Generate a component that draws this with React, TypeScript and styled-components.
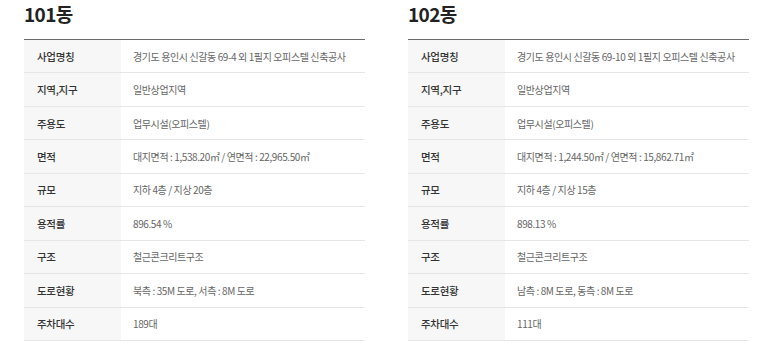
import React from 'react';
import styled, { createGlobalStyle } from 'styled-components';

const GlobalStyle = createGlobalStyle`
  html, body {
    margin: 0;
    padding: 0;
    background: #fff;
  }
  body {
    font-family: "Noto Sans CJK KR", "Noto Sans", sans-serif;
  }
`;

const Page = styled.div`
  display: grid;
  grid-template-columns: 341px 341px;
  column-gap: 43px;
  padding: 0 24px;
`;

const Block = styled.section`
  display: flex;
  flex-direction: column;
`;

const Title = styled.h2`
  margin: 0;
  height: 39px;
  box-sizing: border-box;
  font-size: 19px;
  line-height: 28px;
  font-weight: 700;
  color: #222;
  letter-spacing: -0.6px;
`;

const Table = styled.div`
  border-top: 1px solid #6b6b6b;
`;

const Row = styled.div`
  display: grid;
  grid-template-columns: 97px 1fr;
  height: 33.45px;
  box-sizing: border-box;
  border-bottom: 1px solid #e6e6e6;
`;

const Label = styled.div`
  display: flex;
  align-items: center;
  padding-left: 13px;
  background: #f7f7f8;
  font-size: 10.5px;
  font-weight: 500;
  color: #333;
  letter-spacing: -0.3px;
`;

const Value = styled.div`
  display: flex;
  align-items: center;
  padding-left: 12px;
  font-size: 10px;
  color: #666;
  letter-spacing: -0.4px;
  white-space: nowrap;
`;

interface Building {
  name: string;
  rows: [string, string][];
}

const buildings: Building[] = [
  {
    name: '101동',
    rows: [
      ['사업명칭', '경기도 용인시 신갈동 69-4 외 1필지 오피스텔 신축공사'],
      ['지역,지구', '일반상업지역'],
      ['주용도', '업무시설(오피스텔)'],
      ['면적', '대지면적 : 1,538.20㎡ / 연면적 : 22,965.50㎡'],
      ['규모', '지하 4층 / 지상 20층'],
      ['용적률', '896.54 %'],
      ['구조', '철근콘크리트구조'],
      ['도로현황', '북측 : 35M 도로, 서측 : 8M 도로'],
      ['주차대수', '189대'],
    ],
  },
  {
    name: '102동',
    rows: [
      ['사업명칭', '경기도 용인시 신갈동 69-10 외 1필지 오피스텔 신축공사'],
      ['지역,지구', '일반상업지역'],
      ['주용도', '업무시설(오피스텔)'],
      ['면적', '대지면적 : 1,244.50㎡ / 연면적 : 15,862.71㎡'],
      ['규모', '지하 4층 / 지상 15층'],
      ['용적률', '898.13 %'],
      ['구조', '철근콘크리트구조'],
      ['도로현황', '남측 : 8M 도로, 동측 : 8M 도로'],
      ['주차대수', '111대'],
    ],
  },
];

export default function App() {
  return (
    <>
      <GlobalStyle />
      <Page>
        {buildings.map((b) => (
          <Block key={b.name}>
            <Title>{b.name}</Title>
            <Table>
              {b.rows.map(([k, v]) => (
                <Row key={k}>
                  <Label>{k}</Label>
                  <Value>{v}</Value>
                </Row>
              ))}
            </Table>
          </Block>
        ))}
      </Page>
    </>
  );
}
